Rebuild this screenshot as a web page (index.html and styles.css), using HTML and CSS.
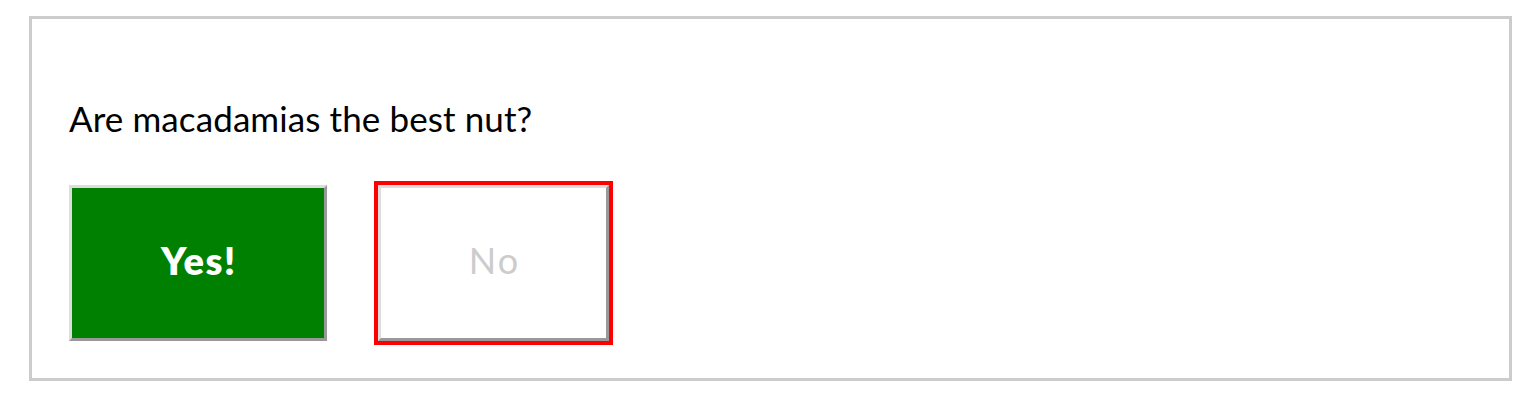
FILE: index.html
```html
<!DOCTYPE html>
<html lang="en">
<head>
<meta charset="utf-8">
<title>Nut poll</title>
<link rel="stylesheet" href="styles.css">
</head>
<body>
<div class="poll">
  <p class="question">Are macadamias the best nut?</p>
  <div class="answers">
    <button class="btn btn-yes" type="button">Yes!</button>
    <button class="btn btn-no" type="button">No</button>
  </div>
</div>
</body>
</html>
```
FILE: styles.css
```css
html, body {
  margin: 0;
  padding: 0;
  background: #fff;
}
body {
  padding: 16px 26px 0 29px;
  font-family: Lato, "Liberation Sans", sans-serif;
}
.poll {
  border: 3px solid #cccccc;
  padding: 78px 37px 0 37px;
  box-sizing: border-box;
  height: 365px;
}
.question {
  margin: 0;
  font-size: 35px;
  line-height: 42px;
  letter-spacing: 0.1px;
  color: #000;
}
.answers {
  display: flex;
  gap: 51px;
  margin-top: 46px;
}
.btn {
  font-family: inherit;
  line-height: 42px;
  height: 156px;
  border: 3px solid;
  border-color: #dddddd #999999 #999999 #dddddd;
  padding: 0 0 6px 0;
  margin: 0;
  box-sizing: border-box;
}
.btn-yes {
  width: 258px;
  background: #008000;
  color: #fff;
  font-size: 38px;
  font-weight: 800;
  letter-spacing: 1.5px;
  text-indent: 1.5px;
}
.btn-no {
  width: 231px;
  background: #fff;
  color: #cccccc;
  font-size: 36px;
  font-weight: 400;
  letter-spacing: 2px;
  text-indent: 2px;
  outline: 4px solid #ff0000;
  outline-offset: 0;
}
```
